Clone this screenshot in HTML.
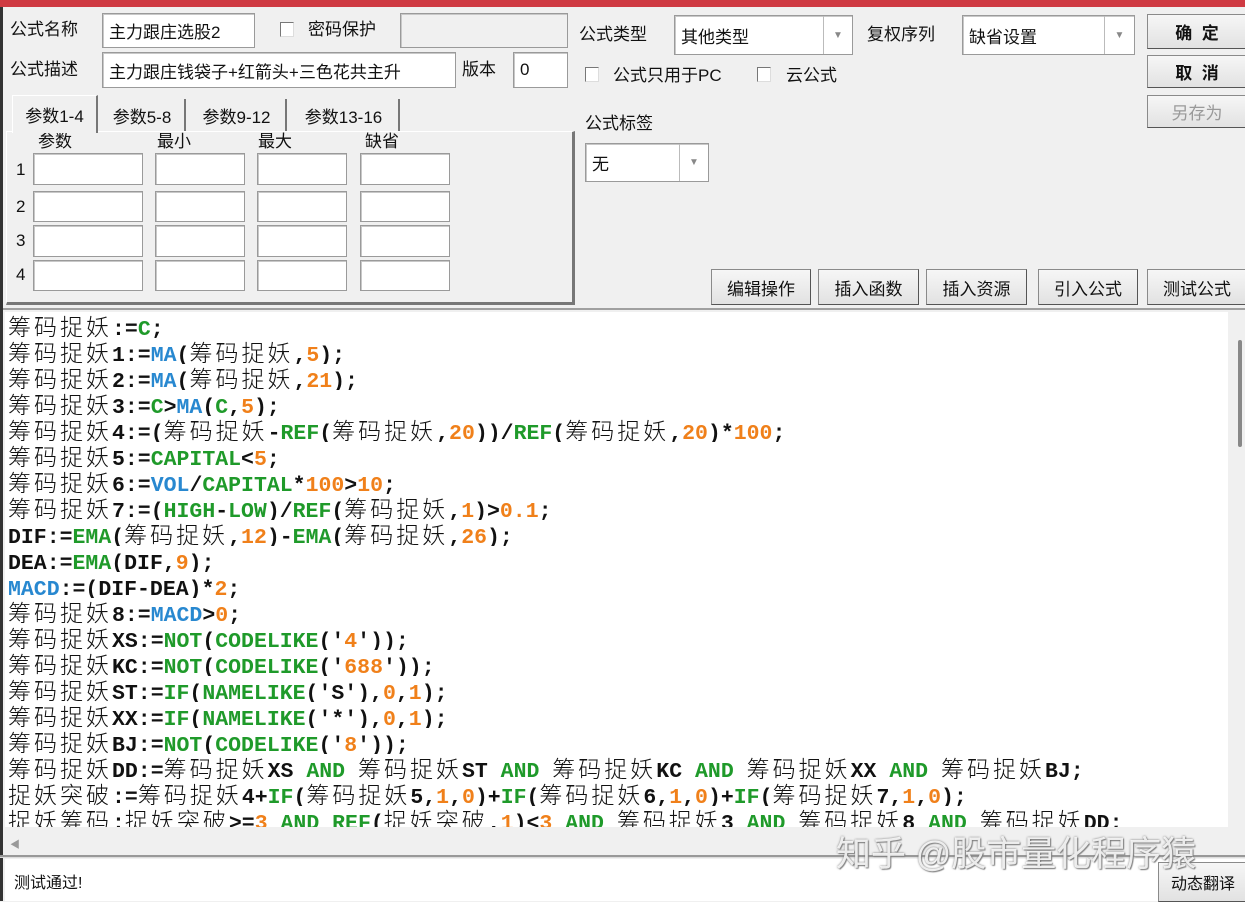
<!DOCTYPE html>
<html><head><meta charset="utf-8"><style>
*{box-sizing:border-box;margin:0;padding:0}
body{width:1245px;height:901px;overflow:hidden;background:#f0f0f0;position:relative;font-family:"Liberation Sans","Noto Sans CJK SC",sans-serif;font-size:17px;color:#111}
.a{position:absolute}
.inp{position:absolute;background:#fff;border:1px solid #9a9a9a;box-shadow:inset 1px 1px 0 #c8c8c8;padding-left:6px;display:flex;align-items:center;white-space:nowrap;overflow:hidden}
.lbl{position:absolute;white-space:nowrap;line-height:20px}
.cb{position:absolute;width:14px;height:15px;border:1px solid #777;border-right-color:#ddd;border-bottom-color:#ddd;background:#fff}
.btn{position:absolute;background:linear-gradient(#f6f6f6,#e2e2e2);border:1px solid #8a8a8a;border-right-color:#555;border-bottom-color:#555;display:flex;align-items:center;justify-content:center;font-size:17px}
.combo .dd{position:absolute;right:0;top:0;bottom:0;border-left:1px solid #bbb;display:flex;align-items:center;justify-content:center;color:#888;font-size:10px}
.tab{position:absolute;top:99px;height:32px;border-right:2px solid #777;display:flex;align-items:center;justify-content:center;font-size:17px}
#code{position:absolute;left:5px;top:312px;width:1223px;height:515px;background:#fff;overflow:hidden;padding-left:3px}
.l{height:26px;line-height:26px;white-space:pre;font-family:"Liberation Mono","Noto Sans CJK SC",monospace;font-weight:bold;font-size:21.5px;color:#111;overflow:hidden}
.l::before{content:"\200b";font-family:"Noto Sans CJK SC",sans-serif;font-size:23px;font-weight:300}
.c{font-family:"Noto Sans CJK SC",sans-serif;font-weight:300;font-size:23px;letter-spacing:3px}
.g{color:#1f9a2a}.b{color:#2888d0}.o{color:#f0801a}
</style></head><body>
<div class="a" style="left:0;top:0;width:1245px;height:7px;background:#cf3a42"></div>
<div class="a" style="left:0;top:7px;width:3px;height:894px;background:#333"></div>

<div class="lbl" style="left:10px;top:20px">公式名称</div>
<div class="inp" style="left:102px;top:13px;width:153px;height:35px">主力跟庄选股2</div>
<div class="cb" style="left:280px;top:22px"></div>
<div class="lbl" style="left:308px;top:20px">密码保护</div>
<div class="inp" style="left:400px;top:13px;width:168px;height:35px;background:#f0f0f0"></div>
<div class="lbl" style="left:10px;top:60px">公式描述</div>
<div class="inp" style="left:102px;top:52px;width:354px;height:36px">主力跟庄钱袋子+红箭头+三色花共主升</div>
<div class="lbl" style="left:462px;top:60px">版本</div>
<div class="inp" style="left:513px;top:52px;width:55px;height:36px">0</div>

<div class="a" style="left:6px;top:131px;width:569px;height:174px;border:1px solid #fff;border-right:3px solid #777;border-bottom:3px solid #777"></div>
<div class="tab" style="left:12px;top:95px;width:86px;height:38px;background:#f0f0f0;border-left:1px solid #fff;border-top:1px solid #fff;z-index:2">参数1-4</div>
<div class="tab" style="left:100px;width:86px">参数5-8</div>
<div class="tab" style="left:188px;width:99px">参数9-12</div>
<div class="tab" style="left:289px;width:111px">参数13-16</div>
<div class="lbl" style="left:38px;top:132px">参数</div>
<div class="lbl" style="left:157px;top:132px">最小</div>
<div class="lbl" style="left:258px;top:132px">最大</div>
<div class="lbl" style="left:365px;top:132px">缺省</div>
<div class="lbl" style="left:16px;top:160px">1</div>
<div class="lbl" style="left:16px;top:197px">2</div>
<div class="lbl" style="left:16px;top:231px">3</div>
<div class="lbl" style="left:16px;top:265px">4</div>
<div class="inp" style="left:33px;top:153px;width:110px;height:32px"></div><div class="inp" style="left:155px;top:153px;width:90px;height:32px"></div><div class="inp" style="left:257px;top:153px;width:90px;height:32px"></div><div class="inp" style="left:360px;top:153px;width:90px;height:32px"></div>
<div class="inp" style="left:33px;top:191px;width:110px;height:31px"></div><div class="inp" style="left:155px;top:191px;width:90px;height:31px"></div><div class="inp" style="left:257px;top:191px;width:90px;height:31px"></div><div class="inp" style="left:360px;top:191px;width:90px;height:31px"></div>
<div class="inp" style="left:33px;top:225px;width:110px;height:32px"></div><div class="inp" style="left:155px;top:225px;width:90px;height:32px"></div><div class="inp" style="left:257px;top:225px;width:90px;height:32px"></div><div class="inp" style="left:360px;top:225px;width:90px;height:32px"></div>
<div class="inp" style="left:33px;top:260px;width:110px;height:31px"></div><div class="inp" style="left:155px;top:260px;width:90px;height:31px"></div><div class="inp" style="left:257px;top:260px;width:90px;height:31px"></div><div class="inp" style="left:360px;top:260px;width:90px;height:31px"></div>

<div class="lbl" style="left:579px;top:25px">公式类型</div>
<div class="inp combo" style="left:674px;top:15px;width:179px;height:40px">其他类型<div class="dd" style="width:29px">▼</div></div>
<div class="lbl" style="left:867px;top:25px">复权序列</div>
<div class="inp combo" style="left:962px;top:15px;width:173px;height:40px">缺省设置<div class="dd" style="width:30px">▼</div></div>
<div class="cb" style="left:585px;top:67px"></div>
<div class="lbl" style="left:613px;top:66px">公式只用于PC</div>
<div class="cb" style="left:757px;top:67px"></div>
<div class="lbl" style="left:786px;top:66px">云公式</div>
<div class="lbl" style="left:585px;top:114px">公式标签</div>
<div class="inp combo" style="left:585px;top:143px;width:124px;height:39px">无<div class="dd" style="width:29px">▼</div></div>

<div class="btn" style="left:1147px;top:14px;width:100px;height:35px;font-weight:bold">确&nbsp;&nbsp;定</div>
<div class="btn" style="left:1147px;top:55px;width:100px;height:33px;font-weight:bold">取&nbsp;&nbsp;消</div>
<div class="btn" style="left:1147px;top:95px;width:100px;height:33px;color:#999">另存为</div>
<div class="btn" style="left:711px;top:269px;width:100px;height:36px">编辑操作</div>
<div class="btn" style="left:818px;top:269px;width:101px;height:36px">插入函数</div>
<div class="btn" style="left:926px;top:269px;width:101px;height:36px">插入资源</div>
<div class="btn" style="left:1038px;top:269px;width:100px;height:36px">引入公式</div>
<div class="btn" style="left:1147px;top:269px;width:100px;height:36px">测试公式</div>

<div class="a" style="left:3px;top:308px;width:1242px;height:2px;background:#a0a0a0"></div>
<div id="code">
<div class="l"><span class="c">筹码捉妖</span>:=<span class="g">C</span>;</div>
<div class="l"><span class="c">筹码捉妖</span>1:=<span class="b">MA</span>(<span class="c">筹码捉妖</span>,<span class="o">5</span>);</div>
<div class="l"><span class="c">筹码捉妖</span>2:=<span class="b">MA</span>(<span class="c">筹码捉妖</span>,<span class="o">21</span>);</div>
<div class="l"><span class="c">筹码捉妖</span>3:=<span class="g">C</span>&gt;<span class="b">MA</span>(<span class="g">C</span>,<span class="o">5</span>);</div>
<div class="l"><span class="c">筹码捉妖</span>4:=(<span class="c">筹码捉妖</span>-<span class="g">REF</span>(<span class="c">筹码捉妖</span>,<span class="o">20</span>))/<span class="g">REF</span>(<span class="c">筹码捉妖</span>,<span class="o">20</span>)*<span class="o">100</span>;</div>
<div class="l"><span class="c">筹码捉妖</span>5:=<span class="g">CAPITAL</span>&lt;<span class="o">5</span>;</div>
<div class="l"><span class="c">筹码捉妖</span>6:=<span class="b">VOL</span>/<span class="g">CAPITAL</span>*<span class="o">100</span>&gt;<span class="o">10</span>;</div>
<div class="l"><span class="c">筹码捉妖</span>7:=(<span class="g">HIGH</span>-<span class="g">LOW</span>)/<span class="g">REF</span>(<span class="c">筹码捉妖</span>,<span class="o">1</span>)&gt;<span class="o">0.1</span>;</div>
<div class="l">DIF:=<span class="g">EMA</span>(<span class="c">筹码捉妖</span>,<span class="o">12</span>)-<span class="g">EMA</span>(<span class="c">筹码捉妖</span>,<span class="o">26</span>);</div>
<div class="l">DEA:=<span class="g">EMA</span>(DIF,<span class="o">9</span>);</div>
<div class="l"><span class="b">MACD</span>:=(DIF-DEA)*<span class="o">2</span>;</div>
<div class="l"><span class="c">筹码捉妖</span>8:=<span class="b">MACD</span>&gt;<span class="o">0</span>;</div>
<div class="l"><span class="c">筹码捉妖</span>XS:=<span class="g">NOT</span>(<span class="g">CODELIKE</span>('<span class="o">4</span>'));</div>
<div class="l"><span class="c">筹码捉妖</span>KC:=<span class="g">NOT</span>(<span class="g">CODELIKE</span>('<span class="o">688</span>'));</div>
<div class="l"><span class="c">筹码捉妖</span>ST:=<span class="g">IF</span>(<span class="g">NAMELIKE</span>('S'),<span class="o">0</span>,<span class="o">1</span>);</div>
<div class="l"><span class="c">筹码捉妖</span>XX:=<span class="g">IF</span>(<span class="g">NAMELIKE</span>('*'),<span class="o">0</span>,<span class="o">1</span>);</div>
<div class="l"><span class="c">筹码捉妖</span>BJ:=<span class="g">NOT</span>(<span class="g">CODELIKE</span>('<span class="o">8</span>'));</div>
<div class="l"><span class="c">筹码捉妖</span>DD:=<span class="c">筹码捉妖</span>XS <span class="g">AND</span> <span class="c">筹码捉妖</span>ST <span class="g">AND</span> <span class="c">筹码捉妖</span>KC <span class="g">AND</span> <span class="c">筹码捉妖</span>XX <span class="g">AND</span> <span class="c">筹码捉妖</span>BJ;</div>
<div class="l"><span class="c">捉妖突破</span>:=<span class="c">筹码捉妖</span>4+<span class="g">IF</span>(<span class="c">筹码捉妖</span>5,<span class="o">1</span>,<span class="o">0</span>)+<span class="g">IF</span>(<span class="c">筹码捉妖</span>6,<span class="o">1</span>,<span class="o">0</span>)+<span class="g">IF</span>(<span class="c">筹码捉妖</span>7,<span class="o">1</span>,<span class="o">0</span>);</div>
<div class="l"><span class="c">捉妖筹码</span>:<span class="c">捉妖突破</span>&gt;=<span class="o">3</span> <span class="g">AND</span> <span class="g">REF</span>(<span class="c">捉妖突破</span>,<span class="o">1</span>)&lt;<span class="o">3</span> <span class="g">AND</span> <span class="c">筹码捉妖</span>3 <span class="g">AND</span> <span class="c">筹码捉妖</span>8 <span class="g">AND</span> <span class="c">筹码捉妖</span>DD;</div>
</div>
<div class="a" style="left:1228px;top:312px;width:17px;height:515px;background:#f0f0f0"></div>
<div class="a" style="left:1238px;top:340px;width:4px;height:107px;background:#888;border-radius:2px"></div>
<div class="a" style="left:5px;top:827px;width:1240px;height:28px;background:#f0f0f0"></div>
<div class="a" style="left:10px;top:836px;color:#999;font-size:10px">◀</div>
<div class="a" style="left:0;top:855px;width:1245px;height:3px;background:#999;border-bottom:1px solid #ddd"></div>
<div class="a" style="left:5px;top:859px;width:1240px;height:42px;background:#fff"></div>
<div class="a" style="left:14px;top:869px;font-size:16px">测试通过!</div>
<div class="btn" style="left:1158px;top:862px;width:90px;height:40px;font-size:16px">动态翻译</div>
<div class="a" style="left:836px;top:826px;font-size:35px;color:rgba(255,255,255,0.85);text-shadow:0 0 2px #777,1px 1px 1px #888;white-space:nowrap">知乎 @股市量化程序猿</div>
</body></html>
